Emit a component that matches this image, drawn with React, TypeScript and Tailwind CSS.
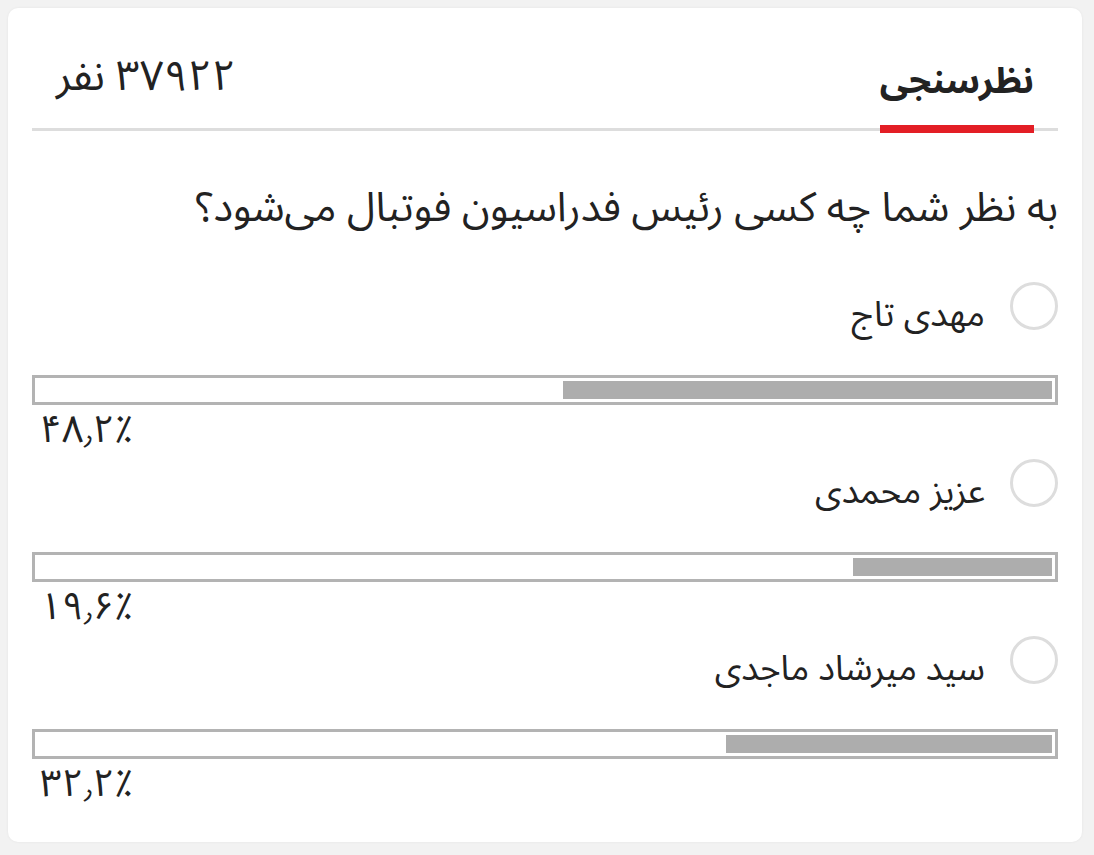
import React from 'react'

type PollOption = {
  id: number
  label: string
  percent: number
  percentText: string
}

const options: PollOption[] = [
  { id: 1, label: 'مهدی تاج', percent: 48.2, percentText: '۴۸٫۲٪' },
  { id: 2, label: 'عزیز محمدی', percent: 19.6, percentText: '۱۹٫۶٪' },
  { id: 3, label: 'سید میرشاد ماجدی', percent: 32.2, percentText: '۳۲٫۲٪' },
]

const font = { fontFamily: '"Noto Sans Arabic", "DejaVu Sans", "Noto Sans", sans-serif' }

export default function App() {
  return (
    <div className="min-h-[855px] bg-[#f2f2f2] pt-2 pb-[13px] pl-2 pr-3" style={font}>
      <div dir="rtl" className="h-[834px] rounded-[10px] bg-white px-6 shadow-[0_0_3px_rgba(0,0,0,0.06)]">
        {/* Header */}
        <div className="flex items-end justify-between border-b-[3px] border-[#dddddd] px-6 pt-[44px]">
          <h2 className="mb-[-5px] border-b-8 border-[#e31e25] pb-[18px] text-[36px] font-bold leading-[50px] text-[#222]">
            نظرسنجی
          </h2>
          <div className="mb-[26px] text-[42px] leading-[50px] text-[#222]">۳۷۹۲۲ نفر</div>
        </div>

        {/* Question */}
        <p className="mt-[49px] text-[41px] leading-[56px] text-[#222]">
          به نظر شما چه کسی رئیس فدراسیون فوتبال می‌شود؟
        </p>

        {/* Options */}
        <div className="mt-[46px]">
          {options.map((option) => (
            <div key={option.id} className="h-[177px]">
              <label className="flex items-start gap-[25px]">
                <span className="h-12 w-12 shrink-0 rounded-full border-[3px] border-[#dddddd]" />
                <span className="mt-[10px] text-[35px] leading-[46px] text-[#222]">{option.label}</span>
              </label>
              <div className="mt-[37px] h-[30px] border-[3px] border-[#b3b3b3] p-[3px]">
                <div className="h-full bg-[#adadad]" style={{ width: `${option.percent}%` }} />
              </div>
              <div dir="ltr" className="mt-[5px] pl-2 text-left text-[38px] leading-[40px] text-[#222]">
                {option.percentText}
              </div>
            </div>
          ))}
        </div>
      </div>
    </div>
  )
}
